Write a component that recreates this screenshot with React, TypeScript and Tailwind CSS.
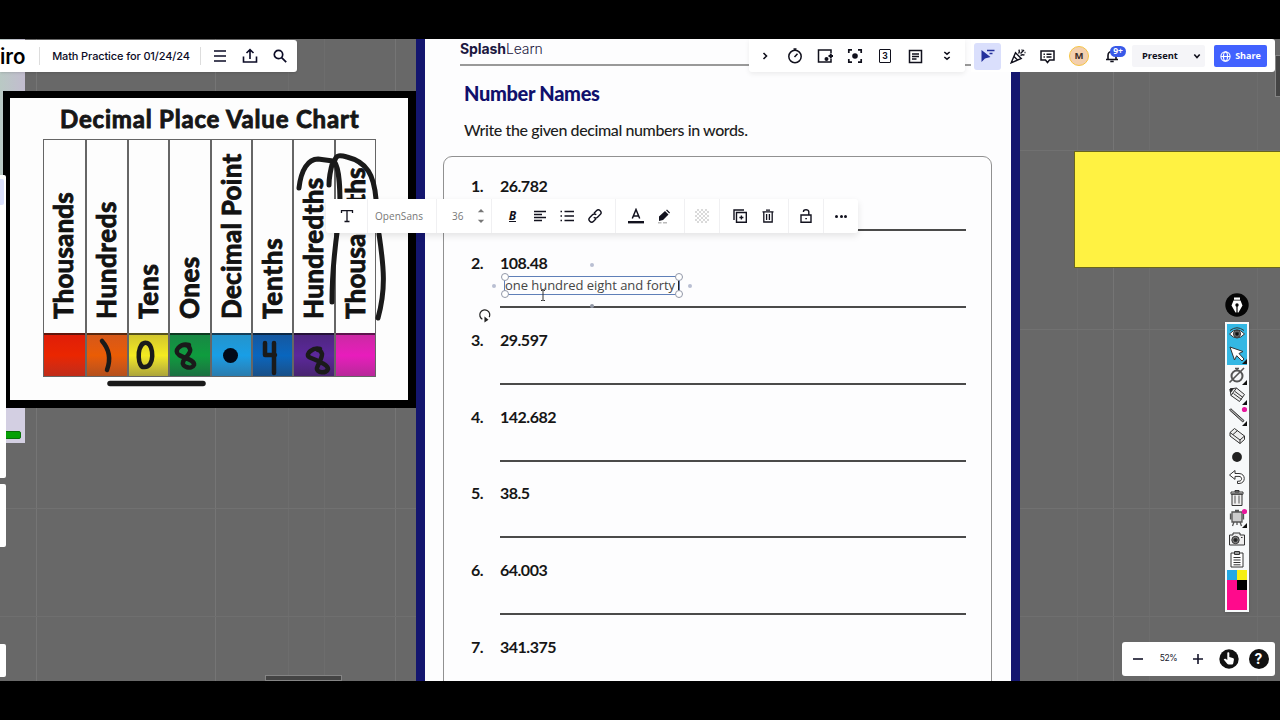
import type { ReactNode } from 'react';

type Column = { label: string; cell: string; text: string };

const columns: Column[] = [
    { label: 'Thousands', cell: 'from-[#e01e08] via-[#ea2600] to-[#c02c18]', text: 'tracking-[0.2px]' },
    { label: 'Hundreds', cell: 'from-[#d65818] via-[#ea5c04] to-[#b4501c]', text: 'tracking-[0.6px]' },
    { label: 'Tens', cell: 'from-[#d2c62c] via-[#f4ea20] to-[#aca43a]', text: 'tracking-[0.8px]' },
    { label: 'Ones', cell: 'from-[#188844] via-[#0e9c3e] to-[#1a7040]', text: 'tracking-[0.5px]' },
    { label: 'Decimal Point', cell: 'from-[#2494cc] via-[#189ee6] to-[#2a7cae]', text: 'tracking-[0.3px]' },
    { label: 'Tenths', cell: 'from-[#1458a0] via-[#0866be] to-[#185088]', text: 'tracking-[0.8px]' },
    { label: 'Hundredths', cell: 'from-[#4e2680] via-[#5c289c] to-[#482470]', text: 'tracking-[0.4px]' },
    { label: 'Thousandths', cell: 'from-[#cc28a4] via-[#e81cbc] to-[#b8289a]', text: 'tracking-[0.2px]' },
];

const questions = ['26.782', '108.48', '29.597', '142.682', '38.5', '64.003', '341.375'];

function Icon({ children, className = 'size-5', box = '0 0 20 20', width = 1.6 }: { children: ReactNode; className?: string; box?: string; width?: number }) {
    return (
        <svg viewBox={box} className={`${className} shrink-0`} fill="none" stroke="currentColor" strokeWidth={width}>
            {children}
        </svg>
    );
}

function Slot({ children, className = 'w-[30px]' }: { children: ReactNode; className?: string }) {
    return <button className={`flex h-full shrink-0 items-center justify-center ${className}`}>{children}</button>;
}

function GridLines() {
    return (
        <svg className="absolute inset-0 h-full w-full" stroke="#757575" strokeWidth="1">
            {[36.5, 215.5, 395.5, 1113.5].map((x) => (
                <path key={x} d={`M${x} 0V642`} />
            ))}
            {[288.5, 324.5, 1077.5, 1149.5, 1257.5].map((x) => (
                <path key={x} d={`M${x} 0V642`} stroke="#6d6d6d" />
            ))}
            {[111.5, 290.5, 469.5].map((y) => (
                <path key={y} d={`M0 ${y}H1280`} stroke="#717171" />
            ))}
            <path d="M0 577.5H1280" stroke="#6f6f6f" />
        </svg>
    );
}

function PlaceValueChart() {
    return (
        <div className="absolute top-[52px] left-[3px] h-[317px] w-[414px] border-[7px] border-r-[9px] border-b-[8px] border-black bg-[#fdfdfd]">
            <h2 className="mt-[4px] ml-[50px] h-[37px] text-[24px] leading-[34px] font-bold tracking-[0.8px] whitespace-nowrap text-[#161616] [-webkit-text-stroke:0.9px_#161616]">
                Decimal Place Value Chart
            </h2>
            <div className="ml-[33px] grid h-[238px] w-[333px] grid-cols-8 border-[1.5px] border-[#666]">
                {columns.map((c, i) => (
                    <div key={c.label} className={`flex min-w-0 flex-col ${i ? 'border-l-2 border-[#666]' : ''}`}>
                        <div className="flex h-[193px] rotate-180 items-center justify-start [writing-mode:vertical-rl]">
                            <span className={`w-full pt-[14px] pl-[3px] text-[26px] leading-[38px] font-bold whitespace-nowrap text-[#121212] [-webkit-text-stroke:0.9px_#121212] ${c.text}`}>
                                {c.label}
                            </span>
                        </div>
                        <div className={`flex flex-1 items-center justify-center border-t-2 border-black/50 bg-linear-to-b ${c.cell}`}>
                            {c.label === 'Decimal Point' && <span className="mr-[2px] size-[15px] rounded-full bg-[#020a18]" />}
                        </div>
                    </div>
                ))}
            </div>
        </div>
    );
}

function Handwriting() {
    return (
        <svg viewBox="0 39 420 642" className="absolute top-0 left-0 h-[642px] w-[420px]" fill="none" stroke="#1a1a1a" strokeWidth="5" strokeLinecap="round" strokeLinejoin="round">
            <path d="M299 188c2-18 9-29 19-29l15 2c-2 7-4 14-4 24" />
            <path d="M334 161c6 8 6 30 6 45s-8 44-8 96" />
            <path d="M335 160c1-5 5-5 12-3 20 5 27 18 29 42M379 234c5 34 7 55-1 84" />
            <path d="M110 383.5H203" strokeWidth="5.5" />
            <g strokeWidth="4.5">
                <path d="M102 341c8 9 9 18 5 29" />
                <path d="M144 343c-8 5-6 25 0 24 11 1 10-22 3-24-2-1-3 0-5 1" />
                <path d="M189 345c-9-2-16 6-10 10 5 3 16 5 15 10-2 5-13 2-11-3 1-4 9-9 7-13-1-3-3-4-5-4" />
                <path d="M265 343v12h10M274 343v30" />
                <path d="M320 349c-7-2-15 5-11 8 6 3 19 7 19 12-1 5-12 4-11-1 1-4 5-9 5-14-1-3-2-4-4-4" />
            </g>
        </svg>
    );
}

function Worksheet() {
    return (
        <section className="absolute top-0 left-[416px] h-[642px] w-[604px] overflow-hidden border-x-[9px] border-[#14166f] bg-[#fdfdfe]">
            <div className="ml-[35px] h-[27px] border-b-2 border-[#999] font-[Inter,sans-serif] text-[14px] leading-[19px] tracking-[-0.1px] text-[#1b1740]">
                <span className="font-bold">Splash</span>
                <span className="font-light">Learn</span>
            </div>
            <h1 className="mt-[13px] ml-[39px] text-[20px] leading-[28px] font-black tracking-[-0.32px] text-[#10106c]">Number Names</h1>
            <p className="mt-[13px] ml-[39px] text-[16px] leading-[20px] font-medium tracking-[-0.4px] text-[#1d1d1d]">Write the given decimal numbers in words.</p>
            <ol className="mt-[16px] ml-[18px] h-[700px] w-[549px] rounded-[9px] border-[1.5px] border-[#919191] pt-[18px] pr-[25px] pl-[27px]">
                {questions.map((q, i) => (
                    <li key={q} className="flex h-[76.85px] text-[16px] leading-[22px] tracking-[-0.5px] text-[#161616]">
                        <span className="w-[29px] font-bold">{i + 1}.</span>
                        <span className="h-[56px] flex-1 border-b-2 border-[#4a4a4a] font-bold">{q}</span>
                    </li>
                ))}
            </ol>
        </section>
    );
}

function TextSelection() {
    return (
        <div className="absolute top-[237px] left-[504px] h-[19px] w-[176px] border border-[#5f7fb8] font-['Open_Sans',sans-serif]">
            <span className="block text-[13px] leading-[17px] tracking-[-0.04px] whitespace-nowrap text-[#454545]">one hundred eight and forty</span>
            <span className="absolute top-[1px] right-[0px] h-[16px] w-[1.5px] bg-[#222]" />
            <span className="absolute -top-[4px] -left-[4px] size-[8px] rounded-full border border-[#9298a8] bg-white" />
            <span className="absolute -top-[4px] -right-[4px] size-[8px] rounded-full border border-[#9298a8] bg-white" />
            <span className="absolute -bottom-[4px] -left-[4px] size-[8px] rounded-full border border-[#9298a8] bg-white" />
            <span className="absolute -right-[4px] -bottom-[4px] size-[8px] rounded-full border border-[#9298a8] bg-white" />
            <span className="absolute top-[7px] -left-[13px] size-1 rounded-full bg-[#b9bfd2]" />
            <span className="absolute top-[7px] -right-[13px] size-1 rounded-full bg-[#b9bfd2]" />
            <span className="absolute -top-[14px] left-[85px] size-1 rounded-full bg-[#b9bfd2]" />
            <span className="absolute top-[27px] left-[85px] size-1 rounded-full bg-[#9096a4]" />
            <svg className="absolute top-[30px] -left-[28px] size-[16px]" viewBox="0 0 15 15" fill="none" stroke="#222" strokeWidth="1.2">
                <path d="M5 11.500A4.700 4.700 0 1 1 11.500 9.500" />
                <path d="M7 9v5.500L10.800 12z" fill="#222" stroke="none" />
            </svg>
            <svg className="absolute top-[13px] left-[34px] h-[11px] w-[8px]" viewBox="0 0 8 11" fill="none" stroke="#333">
                <path d="M2 .5h1.500L4 1l.5-.5H6M4 1v9M2 10.500h1.500L4 10l.5.500H6" />
            </svg>
        </div>
    );
}

function BoardHeader() {
    return (
        <header className="absolute top-px left-0 flex h-[32px] w-[297px] items-center rounded-r-[3px] bg-white text-[#0b0b26] shadow">
            <span className="w-[39px] shrink-0 overflow-hidden font-[Inter,sans-serif] text-[20.5px] leading-[31px] font-semibold text-black">iro</span>
            <span className="flex h-[18px] w-[162px] shrink-0 items-center justify-center border-x border-[#ddd] pl-[2px] font-[Inter,sans-serif] text-[11px] font-medium tracking-[-0.12px] whitespace-nowrap">
                Math Practice for 01/24/24
            </span>
            <Slot className="ml-[4px] w-[30px]">
                <Icon className="size-[14px]" box="0 0 14 14">
                    <path d="M1 2h12M1 7h12M1 12h12" />
                </Icon>
            </Slot>
            <Slot>
                <Icon className="size-[16px]" box="0 0 16 16">
                    <path d="M1.500 8.500v5.500h13V8.500M8 11V2M4.500 5 8 1.700 11.500 5" />
                </Icon>
            </Slot>
            <Slot>
                <Icon className="size-[14px]" box="0 0 14 14" width={1.7}>
                    <circle cx="5.500" cy="5.500" r="4.200" />
                    <path d="m8.600 8.600 4.600 4.600" />
                </Icon>
            </Slot>
        </header>
    );
}

function AppsBar() {
    return (
        <nav className="absolute top-0 left-[749px] flex h-[33px] w-[216px] items-center rounded-b-[3px] bg-white pt-px pl-px text-[#10101c] shadow-[0_2px_5px_rgba(0,0,0,0.07)]">
            <Slot>
                <Icon className="size-[10px]" box="0 0 10 10">
                    <path d="m3.500 2 3 3-3 3" />
                </Icon>
            </Slot>
            <Slot>
                <Icon className="size-[16px]" box="0 0 16 16" width={1.5}>
                    <circle cx="8" cy="8.500" r="6.200" />
                    <path d="M6.500 1h3M8 1v1.500M7.500 9l3-3.300" />
                </Icon>
            </Slot>
            <Slot>
                <Icon className="size-[16px]" box="0 0 16 16" width={1.5}>
                    <path d="M14 5V2H1.500v12H14v-3" />
                    <circle cx="9.500" cy="11" r="2" fill="currentColor" stroke="none" />
                    <path d="M13.800 5.500v5M11.500 8h4.500" strokeWidth="2" />
                </Icon>
            </Slot>
            <Slot>
                <Icon className="size-[16px]" box="0 0 16 16" width={1.7}>
                    <path d="M5 1.800H1.800V5M11 1.800h3.200V5M5 14.200H1.800V11M11 14.200h3.200V11" />
                    <circle cx="8" cy="8" r="2.800" fill="currentColor" stroke="none" />
                </Icon>
            </Slot>
            <Slot>
                <span className="flex h-[14px] w-[12px] items-center justify-center rounded-[1px] border-[1.5px] border-current font-[Inter,sans-serif] text-[8.5px] font-bold">3</span>
            </Slot>
            <Slot>
                <Icon className="size-[15px]" box="0 0 15 15" width={1.5}>
                    <path d="M1.500 1.500h12v12h-12zM4 5h7M4 7.500h7M4 10h4.500" />
                </Icon>
            </Slot>
            <Slot className="w-[34px]">
                <Icon className="size-[10px]" box="0 0 10 10" width={1.5}>
                    <path d="m2.300 1 2.700 2.200L7.700 1M2.300 6 5 8.200 7.700 6" />
                </Icon>
            </Slot>
        </nav>
    );
}

function CollabBar() {
    return (
        <nav className="absolute top-0 left-[971px] flex h-[33px] w-[304px] items-center rounded-r-[3px] bg-white pt-px pl-[3px] text-[#10101c]">
            <Slot className="w-[27px]">
                <span className="flex size-[27px] items-center justify-center rounded-[3px] bg-[#dadffc] text-[#24309c]">
                    <Icon className="size-[16px]" box="0 0 16 16" width={1.5}>
                        <path d="M1.500 2v12l3.500-3.500L10.500 9z" fill="currentColor" stroke="none" />
                        <path d="M7 2.500h7.500M9.500 5.500h3" />
                    </Icon>
                </span>
            </Slot>
            <Slot className="ml-[2px] w-[30px]">
                <Icon className="size-[16px]" box="0 0 16 16" width={1.4}>
                    <path d="M1.200 14.800 5.500 4.800l5.700 5.700zM4 8.500l3.500 3.500M8.500 5.500c1-1 1-2.500.3-3.800M10.500 7.500c1.300-1 2.800-1 4-.3M10.500 5.500l3.500-3.500M12 1.500v1M14.500 4.500h1" />
                </Icon>
            </Slot>
            <Slot className="w-[29px]">
                <Icon className="size-[15px]" box="0 0 15 15" width={1.5}>
                    <path d="M1 2h13v9H9.500L7.500 13.500 5.500 11H1zM6.500 5.200H11.500M6.500 8h5M3.500 5.200h1.400M3.500 8h1.400" />
                </Icon>
            </Slot>
            <Slot className="w-[34px]">
                <span className="flex size-[20px] items-center justify-center rounded-full border-[1.5px] border-[#f5c444] bg-[#f3cfae] font-['Open_Sans',sans-serif] text-[9.5px] font-bold text-[#3a2c28]">M</span>
            </Slot>
            <Slot className="relative w-[31px]">
                <Icon className="size-[14px]" box="0 0 14 14">
                    <path d="M1 10.500h12M3 10V6.500C3 4 4.500 2.500 7 2.500M11 7.500V10M5.300 12.500h3.400" />
                </Icon>
                <span className="absolute top-[6px] left-[14px] flex h-[11px] w-[16px] items-center justify-center rounded-full bg-[#3859e8] font-['Open_Sans',sans-serif] text-[8.5px] font-bold text-white">9+</span>
            </Slot>
            <button className="ml-[5px] flex h-[22px] w-[73px] items-center rounded-[2px] bg-[#f5f5f8] pl-[10px] font-['Open_Sans',sans-serif] text-[9.3px] font-bold">
                Present
                <svg className="ml-[15px] size-[8px]" viewBox="0 0 8 8" fill="none" stroke="currentColor" strokeWidth="1.6">
                    <path d="m1.300 2.500 2.700 3 2.700-3" />
                </svg>
            </button>
            <button className="ml-[9px] flex h-[22px] w-[53px] items-center justify-center gap-[4px] rounded-[2px] bg-[#4262ff] font-['Open_Sans',sans-serif] text-[9px] font-bold text-white">
                <Icon className="size-[11px]" box="0 0 11 11" width={1.1}>
                    <circle cx="5.500" cy="5.500" r="4.600" />
                    <ellipse cx="5.500" cy="5.500" rx="2" ry="4.600" />
                    <path d="M1 5.500h9" />
                </Icon>
                Share
            </button>
        </nav>
    );
}

function Group({ className, children }: { className: string; children: ReactNode }) {
    return <div className={`flex h-full shrink-0 items-center ${className}`}>{children}</div>;
}

function TextToolbar() {
    return (
        <div className="absolute top-[160px] left-[326px] flex h-[34px] w-[532px] items-center divide-x divide-[#f0f0f2] rounded-[3px] bg-white text-[#12121e] shadow-[0_3px_7px_rgba(0,0,0,0.1)]">
            <Group className="w-[42px] justify-center">
                <Icon className="size-[14px]" box="0 0 14 14" width={1.3}>
                    <path d="M1.500 4V1.700h11V4M7 1.700v10.800M4.500 12.500h5" />
                </Icon>
            </Group>
            <Group className="w-[69px] pl-[7px] font-['Open_Sans',sans-serif] text-[10px] tracking-[0.05px] text-[#777]">OpenSans</Group>
            <Group className="w-[55px] pl-[15px] font-['Open_Sans',sans-serif] text-[10px] text-[#777]">
                <span className="w-[21px]">36</span>
                <svg className="size-[16px]" viewBox="0 0 14 14" fill="currentColor">
                    <path d="m4.200 3.800 2.800-3 2.800 3zM4.200 10.200l2.800 3 2.800-3z" />
                </svg>
            </Group>
            <Group className="w-[124px] pl-[7px]">
                <Slot className="w-[27px]">
                    <span className="border-b-[1.5px] border-current font-['Open_Sans',sans-serif] text-[12px] leading-[11px] font-bold italic">B</span>
                </Slot>
                <Slot className="w-[27px]">
                    <Icon className="size-[14px]" box="0 0 14 14" width={1.3}>
                        <path d="M1 2.500h12M1 5.500h8M1 8.500h12M1 11.500h8" />
                    </Icon>
                </Slot>
                <Slot className="w-[28px]">
                    <Icon className="size-[14px]" box="0 0 14 14" width={1.3}>
                        <path d="M4.500 2.500H14M4.500 7H14M4.500 11.500H14M.5 2.500H2M.5 7H2M.5 11.500H2" />
                    </Icon>
                </Slot>
                <Slot className="w-[27px]">
                    <Icon className="size-[14px]" box="0 0 14 14" width={1.4}>
                        <path d="M6 4.200 8.400 1.800a2.600 2.600 0 0 1 3.800 3.800L9.500 8.300a2.500 2.500 0 0 1-3.700-.1M8 9.800l-2.400 2.400a2.600 2.600 0 0 1-3.800-3.800l2.700-2.700a2.500 2.500 0 0 1 3.700.1" />
                    </Icon>
                </Slot>
            </Group>
            <Group className="w-[69px] pl-[6px]">
                <Slot className="w-[28px]">
                    <Icon className="size-[16px]" box="0 0 16 16" width={1.5}>
                        <path d="m4.300 10.500 3.700-9 3.700 9M5.500 8h5" />
                        <path d="M0 14.200h16" strokeWidth="2.4" />
                    </Icon>
                </Slot>
                <Slot className="w-[27px]">
                    <svg className="size-[15px]" viewBox="0 0 15 15" fill="currentColor">
                        <path d="m3 7.500 6-5.500 3.500 3.500L7 11l-4 1zM10 1.200 11 .4l3 3-.8 1z" />
                        <path d="M2 13h3.500v1.500H2zM7 13h4v1.500H7z" fill="#bbb" />
                    </svg>
                </Slot>
            </Group>
            <Group className="w-[35px] justify-center">
                <svg className="size-[14px]" viewBox="0 0 14 14" fill="#dadada">
                    {[0, 1, 2, 3, 4, 5, 6].map((r) =>
                        [0, 1, 2, 3, 4, 5, 6]
                            .filter((c) => (r + c) % 2 === 1 && (r - 3) ** 2 + (c - 3) ** 2 < 14)
                            .map((c) => <rect key={`${r}-${c}`} x={c * 2} y={r * 2} width="2" height="2" />)
                    )}
                </svg>
            </Group>
            <Group className="w-[69px] pl-[6px]">
                <Slot className="w-[28px]">
                    <Icon className="size-[14px]" box="0 0 14 14" width={1.4}>
                        <path d="M1 11V1h10M3.500 3.500h9.800v9.800H3.500zM8.400 6.500v4M6.400 8.500h4" />
                    </Icon>
                </Slot>
                <Slot className="w-[27px]">
                    <Icon className="size-[14px]" box="0 0 14 14" width={1.3}>
                        <path d="M1.500 2.800h11M5 1.200h4M2.800 3v10h8.400V3M5.600 5v6M8.400 5v6" />
                    </Icon>
                </Slot>
            </Group>
            <Group className="w-[35px] justify-center">
                <Icon className="size-[14px]" box="0 0 14 14" width={1.4}>
                    <path d="M2 6h10v7.300H2zM4.500 3V2.500Q4.500.7 7 .7t2.800 2V6M6.300 9.600h1.600" />
                </Icon>
            </Group>
            <Group className="w-[34px] justify-center gap-[1.5px]">
                <span className="size-[3px] rounded-full bg-current" />
                <span className="size-[3px] rounded-full bg-current" />
                <span className="size-[3px] rounded-full bg-current" />
            </Group>
        </div>
    );
}

const corner = <path d="M20 15v5h-5z" fill="#111" stroke="none" />;

const penTools: ReactNode[] = [
    <g key="eye">
        <path d="M2.500 10Q10 1.500 17.500 10 10 18 2.500 10z" fill="#fff" />
        <circle cx="10" cy="9.800" r="3.600" fill="#777" />
        <circle cx="10" cy="9.800" r="1.800" fill="#111" />
        <path d="M3 6.500Q10 1 17 6.500" />
    </g>,
    <g key="arrow">
        <path d="m3 3 13 4.500-4 2 5 5.500-2 2-5.300-5.300L7.500 16z" fill="#fff" />
        {corner}
    </g>,
    <g key="timer" stroke="#555">
        <circle cx="10" cy="11" r="5.500" strokeWidth="2" />
        <path d="M8 3.500h4M10 4v2M2.500 17.500 17 3" strokeWidth="1.6" />
        {corner}
    </g>,
    <g key="pencil">
        <path d="M3 4 9.500 3 17.500 9.500l-5 7L4 10.500z" fill="#eee" />
        <path d="m4 10.500 5.500-7.500M6.500 8.500l8 6M8 6.500l8 6" fill="none" />
        <path d="m3 4 3.500-.5L3.500 7.500z" fill="#111" />
        {corner}
    </g>,
    <g key="line">
        <path d="m2.500 4 1.300-1.300L17 14.500 15.800 16z" fill="#aaa" />
        <circle cx="17.500" cy="3.500" r="2.600" fill="#e8169c" stroke="none" />
        {corner}
    </g>,
    <g key="eraser">
        <path d="M3 6.500 7.500 2.500 17.500 10v3.500l-4.500 4L3 10z" fill="#eee" />
        <path d="M3 6.500 13 14l4.500-4M13 14v3.500M6 8.500l4.500-4" />
    </g>,
    <circle key="dot" cx="10" cy="10" r="4.900" fill="#222" stroke="none" />,
    <path key="undo" d="M2.500 8 8 3.500v3h4c7 0 7 10 0 10h-1.500v-2.300H12c3.500 0 3.500-4.800 0-4.800H8v3z" fill="#fff" />,
    <g key="trash">
        <path d="M5 6h10v11.500H5zM4 4h12v2.200H4zM8 2.500h4V4H8z" fill="#eee" />
        <path d="M8 7.500v8M12 7.500v8" stroke="#555" />
    </g>,
    <g key="screen" stroke="#555">
        <path d="M5 4h10v10H5zM3.500 5.500v6M16.500 5.500v6M7 14l-1.500 4M13 14l1.500 4M10 14v3M8 2.500h4" fill="#ccc" strokeWidth="1.3" />
        <circle cx="17.500" cy="3.500" r="2.600" fill="#e8169c" stroke="none" />
        {corner}
    </g>,
    <g key="camera">
        <path d="M2.500 6h3.500V4h7v2h4.500v10h-15z" fill="#eee" />
        <circle cx="8.500" cy="11" r="3.700" fill="#888" />
        <circle cx="8.500" cy="11" r="1.700" fill="#222" />
        <path d="M14 8.500h1.500" />
    </g>,
    <path key="clipboard" d="M4 4h12v14H4zM7.500 2.500h5v3h-5zM6.500 8.500h7M6.500 11h7M6.500 13.500h7M6.500 15.800h7" fill="#fff" />,
];

function PenToolbar() {
    return (
        <aside className="absolute top-[254px] left-[1225px] flex w-[24px] flex-col items-center">
            <svg className="size-[24px]" viewBox="0 0 24 24">
                <circle cx="12" cy="12" r="11.700" fill="#050505" />
                <path d="M9 4.500h6v2.200H9zM8.500 7.500h7l2 5-4 7h-3l-4-7z" fill="#fff" />
                <path d="M12 12v8" stroke="#050505" strokeWidth="1.2" />
                <circle cx="12" cy="12" r="1.700" fill="#050505" />
            </svg>
            <div className="mt-[5px] w-[24px] border-2 border-[#f7f9fa] bg-[#f7f9fa] shadow">
                {penTools.map((tool, i) => (
                    <button key={i} className={`flex h-[20.5px] w-[20px] items-center justify-center pb-px ${i < 2 ? 'bg-[#34b8e4]' : ''}`}>
                        <svg className="h-[20px] w-[20px] shrink-0" viewBox="0 0 20 20" fill="none" stroke="#333" strokeWidth="1">
                            {tool}
                        </svg>
                    </button>
                ))}
                <div className="grid h-[40px] grid-cols-2 grid-rows-[10px_10px_20px] bg-[#ff0a8c]">
                    <span className="bg-[#22a8e4]" />
                    <span className="bg-[#f6ee10]" />
                    <span />
                    <span className="bg-black" />
                </div>
            </div>
        </aside>
    );
}

function ZoomBar() {
    return (
        <div className="absolute top-[603px] left-[1122px] flex h-[34px] w-[153px] items-center rounded-[3px] bg-white pb-px pl-px text-[#15152a]">
            <Slot>
                <Icon className="size-[10px]" box="0 0 10 10">
                    <path d="M0 5h10" />
                </Icon>
            </Slot>
            <span className="w-[31px] text-center font-[Inter,sans-serif] text-[8.5px] tracking-[-0.4px]">52%</span>
            <Slot className="w-[28px]">
                <Icon className="size-[10px]" box="0 0 10 10">
                    <path d="M0 5h10M5 0v10" />
                </Icon>
            </Slot>
            <Slot className="ml-[2px] w-[30px]">
                <svg className="size-[20px]" viewBox="0 0 20 20">
                    <circle cx="10" cy="10" r="9.700" fill="#111" />
                    <path d="M8.300 4.300c0-1.400 2-1.400 2 0V8l3.400 1c1 .3 1.300.8 1.200 1.700L14.300 14c-.2 1-.8 1.500-1.800 1.500H9.800c-.7 0-1.200-.3-1.600-.8L4.700 10.500c.6-1 1.600-1 2.300-.4l1.300 1z" fill="#fff" />
                </svg>
            </Slot>
            <Slot className="w-[29px]">
                <span className="flex size-[20px] items-center justify-center rounded-full bg-[#111] font-[Inter,sans-serif] text-[14px] font-bold text-white">?</span>
            </Slot>
        </div>
    );
}

export default function App() {
    return (
        <div className="h-[720px] w-[1280px] overflow-hidden bg-black py-[39px] font-[Lato,sans-serif]">
            <main className="relative h-[642px] overflow-hidden bg-[#686868]">
                <GridLines />
                <div className="absolute top-0 left-0 flex h-[404px] w-[25px] flex-col justify-end bg-linear-to-r from-[#b9c9c4] to-[#c2bccf]">
                    <div className="flex h-[35px] flex-col bg-[#d3cfe2] pt-[23px]">
                        <span className="h-[8px] w-[21px] rounded-r-[2px] border border-[#087008] bg-[#06a006]" />
                    </div>
                </div>
                <PlaceValueChart />
                <Worksheet />
                <Handwriting />
                <div className="absolute top-[112px] left-[1074px] h-[117px] w-[206px] border border-r-0 border-[#6a661c] bg-[#fff242]" />
                <div className="absolute top-[136px] left-0 flex h-[502px] w-[6px] flex-col">
                    <div className="h-[303px] rounded-r-[2px] bg-white pt-[4px]">
                        <div className="h-[26px] w-[4px] rounded-r-[2px] bg-[#dadffc]" />
                    </div>
                    <div className="mt-[6px] h-[63px] rounded-r-[2px] bg-white" />
                    <div className="mt-auto h-[33px] rounded-r-[2px] bg-white" />
                </div>
                <TextSelection />
                <BoardHeader />
                <AppsBar />
                <CollabBar />
                <TextToolbar />
                <PenToolbar />
                <ZoomBar />
                <div className="absolute top-[636px] left-[265px] h-[6px] w-[77px] border border-[#858585] bg-[#444]" />
                <div className="absolute top-[16px] left-[1275px] h-[42px] w-[6px] border border-[#858585] bg-[#444]" />
            </main>
        </div>
    );
}
